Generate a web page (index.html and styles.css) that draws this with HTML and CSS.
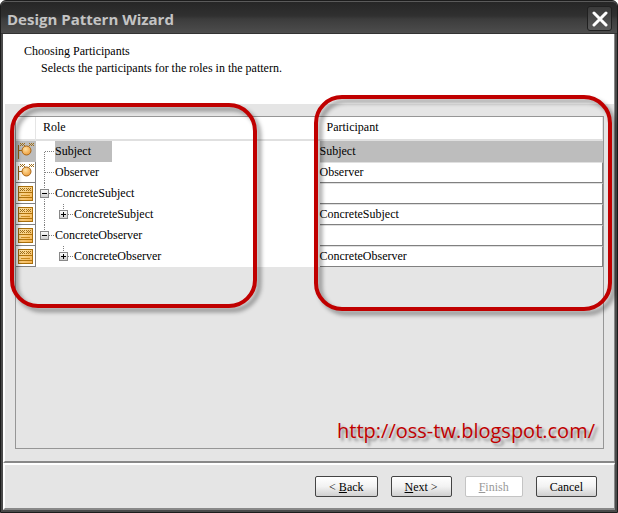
FILE: index.html
```html
<!DOCTYPE html>
<html lang="en">
<head>
<meta charset="utf-8">
<title>Design Pattern Wizard</title>
<link rel="stylesheet" href="styles.css">
</head>
<body>
<svg class="defs" aria-hidden="true">
  <defs>
    <linearGradient id="gold" x1="0" y1="0" x2="1" y2="1"><stop offset="0" stop-color="#ffe9b0"/><stop offset="1" stop-color="#f4b04c"/></linearGradient>
    <radialGradient id="ball" cx=".4" cy=".35" r=".7"><stop offset="0" stop-color="#ffe0a0"/><stop offset="1" stop-color="#ec9a38"/></radialGradient>
    <linearGradient id="knob" x1="0" y1="0" x2="0" y2="1"><stop offset="0" stop-color="#fff"/><stop offset="1" stop-color="#ccc"/></linearGradient>
    <g id="marks" fill="#a0701c"><path d="M0 0h1v1h-1zM2 0h1v1h-1zM4 0h1v1h-1zM1 1h1v1h-1zM3 1h1v1h-1zM0 2h1v1h-1zM2 2h1v1h-1zM4 2h1v1h-1z"/></g>
    <symbol id="interface" viewBox="0 0 18 19">
      <path d="M1.500 3v14M2 8.500h4" stroke="#996515" fill="none"/>
      <use href="#marks" x="3" y="1"/><use href="#marks" x="12" y="1"/>
      <circle cx="9.500" cy="8.500" r="4.500" fill="url(#ball)" stroke="#a86514"/>
    </symbol>
    <symbol id="class" viewBox="0 0 18 19">
      <rect x="1.500" y="2.500" width="14" height="14" fill="url(#gold)" stroke="#a96f0b"/>
      <path d="M2 8.500h13M2 13.500h13" stroke="#b0730c"/>
      <path d="M4 11.500h9" stroke="#c98a20"/>
      <use href="#marks" x="3" y="4"/><use href="#marks" x="9" y="4"/>
    </symbol>
    <symbol id="minus" viewBox="0 0 9 9"><rect x=".5" y=".5" width="8" height="8" fill="url(#knob)" stroke="#888"/><path d="M2 4.500h5" stroke="#000"/></symbol>
    <symbol id="plus" viewBox="0 0 9 9"><rect x=".5" y=".5" width="8" height="8" fill="url(#knob)" stroke="#888"/><path d="M2 4.500h5M4.500 2v5" stroke="#000"/></symbol>
  </defs>
</svg>
<main class="window">
  <header class="titlebar">
    <h1>Design Pattern Wizard</h1>
    <button class="close" type="button" aria-label="Close"><svg width="16" height="16" viewBox="0 0 16 16"><path d="M2 2l12 12M14 2L2 14" stroke="#fff" stroke-width="3" stroke-linecap="round"/></svg></button>
  </header>
  <section class="intro">
    <h2>Choosing Participants</h2>
    <p>Selects the participants for the roles in the pattern.</p>
  </section>
  <section class="content">
    <div class="tree">
      <table>
        <colgroup><col class="icon-col"><col><col></colgroup>
        <thead><tr><th aria-label="Type"></th><th>Role</th><th>Participant</th></tr></thead>
        <tbody>
          <tr class="selected">
            <td class="kind"><svg><use href="#interface"/></svg></td>
            <td><div class="node"><svg class="guide"><path d="M8.500 11v10M9 10.500h10"/></svg><span class="label">Subject</span></div></td>
            <td class="participant">Subject</td>
          </tr>
          <tr>
            <td class="kind"><svg><use href="#interface"/></svg></td>
            <td><div class="node"><svg class="guide"><path d="M8.500 0v21M9 10.500h10"/></svg><span class="label">Observer</span></div></td>
            <td class="participant">Observer</td>
          </tr>
          <tr>
            <td class="kind"><svg><use href="#class"/></svg></td>
            <td><div class="node"><button class="toggle" type="button" aria-label="Collapse ConcreteSubject"><svg class="guide"><path d="M8.500 0v21M13 10.500h6"/><use href="#minus" x="4" y="6" width="9" height="9"/></svg></button><span class="label">ConcreteSubject</span></div></td>
            <td class="participant"></td>
          </tr>
          <tr>
            <td class="kind"><svg><use href="#class"/></svg></td>
            <td><div class="node"><svg class="guide"><path d="M8.500 0v21"/></svg><button class="toggle" type="button" aria-label="Expand ConcreteSubject"><svg class="guide"><path d="M8.500 0v6M13 10.500h6"/><use href="#plus" x="4" y="6" width="9" height="9"/></svg></button><span class="label">ConcreteSubject</span></div></td>
            <td class="participant">ConcreteSubject</td>
          </tr>
          <tr>
            <td class="kind"><svg><use href="#class"/></svg></td>
            <td><div class="node"><button class="toggle" type="button" aria-label="Collapse ConcreteObserver"><svg class="guide"><path d="M8.500 0v6M13 10.500h6"/><use href="#minus" x="4" y="6" width="9" height="9"/></svg></button><span class="label">ConcreteObserver</span></div></td>
            <td class="participant"></td>
          </tr>
          <tr>
            <td class="kind"><svg><use href="#class"/></svg></td>
            <td><div class="node"><svg class="guide"></svg><button class="toggle" type="button" aria-label="Expand ConcreteObserver"><svg class="guide"><path d="M8.500 0v6M13 10.500h6"/><use href="#plus" x="4" y="6" width="9" height="9"/></svg></button><span class="label">ConcreteObserver</span></div></td>
            <td class="participant">ConcreteObserver</td>
          </tr>
        </tbody>
      </table>
      <a class="site" href="http://oss-tw.blogspot.com/">http://oss-tw.blogspot.com/</a>
      <div class="ring ring-role"></div>
      <div class="ring ring-participant"></div>
    </div>
  </section>
  <footer class="actions">
    <button type="button">&lt; <u>B</u>ack</button>
    <button type="button"><u>N</u>ext &gt;</button>
    <button type="button" disabled><u>F</u>inish</button>
    <button type="button">Cancel</button>
  </footer>
</main>
</body>
</html>
```
FILE: styles.css
```css
* { box-sizing: border-box; }

body {
  margin: 0;
  background: #fff;
  color: #000;
  font: 12px/16px "Liberation Serif", serif;
}

button { font: inherit; color: inherit; }

.defs { position: absolute; width: 0; height: 0; }

.window {
  display: flex;
  flex-direction: column;
  min-height: 100vh;
  padding: 0 2px 2px;
  border: 1px solid #1c1c1c;
  border-radius: 6px 6px 0 0;
  background: #4a4a4a;
}

.titlebar {
  display: flex;
  align-items: center;
  justify-content: space-between;
  height: 33px;
  margin: 0 -2px;
  padding: 2px 5px 0 6px;
  border-top: 1px solid #5a5a5a;
  border-bottom: 1px solid #333;
  border-radius: 5px 5px 0 0;
  background: linear-gradient(#262626, #303030 45%, #3c3c3c 55%, #4d4d4d);
}

.titlebar h1 {
  margin: 0;
  color: #c4c4c4;
  font: bold 15px/24px "Open Sans", sans-serif;
}

.close {
  display: grid;
  place-items: center;
  width: 25px;
  height: 25px;
  padding: 0;
  border: 1px solid #202020;
  border-radius: 3px;
  background: linear-gradient(#3a3a3a, #5a5a5a);
}

.intro {
  height: 70px;
  padding: 9px 21px;
  border-right: 1px solid #888;
  background: #fff;
}

.intro h2, .intro p { margin: 0; font: inherit; }
.intro p { padding: 1px 17px; }

.content {
  display: flex;
  flex: 1;
  padding: 12px 10px 12px;
  border: solid #888;
  border-width: 0 1px 2px 0;
  border-left: 2px solid #fff;
  background: #e5e5e5;
}

.tree {
  position: relative;
  display: flex;
  flex: 1;
  flex-direction: column;
  justify-content: space-between;
  border: 1px solid #969696;
}

table {
  width: 100%;
  border-collapse: separate;
  border-spacing: 0;
  table-layout: fixed;
  background: #fff;
}

.icon-col { width: 20px; }

th {
  height: 24px;
  padding: 0 7px 2px;
  border-bottom: 2px solid #e0e0e0;
  font-weight: normal;
  text-align: left;
}

th:first-child, th:last-child { border-right: 1px solid #e5e5e5; }

td { height: 21px; padding: 0; }

.kind {
  border: solid #808080;
  border-width: 0 1px 1px 0;
  padding-left: 1px;
}

.kind svg { display: block; width: 18px; height: 19px; }

.node { display: flex; height: 21px; }

.guide { display: block; flex: none; width: 19px; height: 21px; }
.guide > path { fill: none; stroke: #808080; stroke-dasharray: 1 1; }

.toggle { padding: 0; border: 0; background: none; }

.label { line-height: 21px; }

.participant {
  padding-bottom: 2px;
  border: solid #808080;
  border-width: 1px 1px 1px 0;
  border-top-color: #e0e0e0;
}

.selected .kind, .selected .participant {
  border-color: #bdbdbd;
  background: #bdbdbd;
}

.selected .label { padding-right: 21px; background: #bdbdbd; }

.site {
  align-self: flex-end;
  padding-right: 8px;
  color: #c00000;
  font: 20px/34px "Open Sans", sans-serif;
  text-decoration: none;
  text-shadow: 3px 3px 3px rgba(0, 0, 0, .4);
}

.ring {
  position: absolute;
  border: 4px solid #c00000;
  border-radius: 28px;
  filter: drop-shadow(4px 4px 2px rgba(0, 0, 0, .4));
  pointer-events: none;
}

.ring-role { top: -14px; left: -6px; width: 247px; height: 205px; }
.ring-participant { top: -22px; right: -9px; left: calc(50% + 4px); height: 216px; }

.actions {
  display: flex;
  justify-content: flex-end;
  gap: 13px;
  padding: 11px 17px 11px;
  border: 2px solid #fff;
  border-right: 1px solid #888;
  border-bottom: 2px solid #888;
  background: #e5e5e5;
}

.actions button {
  height: 21px;
  padding: 0 13px;
  border: 1px solid #444;
  border-radius: 2px;
  background: linear-gradient(#fff, #f2f2f2 50%, #d0d0d0);
}

.actions button:disabled {
  border-color: #c4c4c4;
  background: #fff;
  color: #999;
}
```
